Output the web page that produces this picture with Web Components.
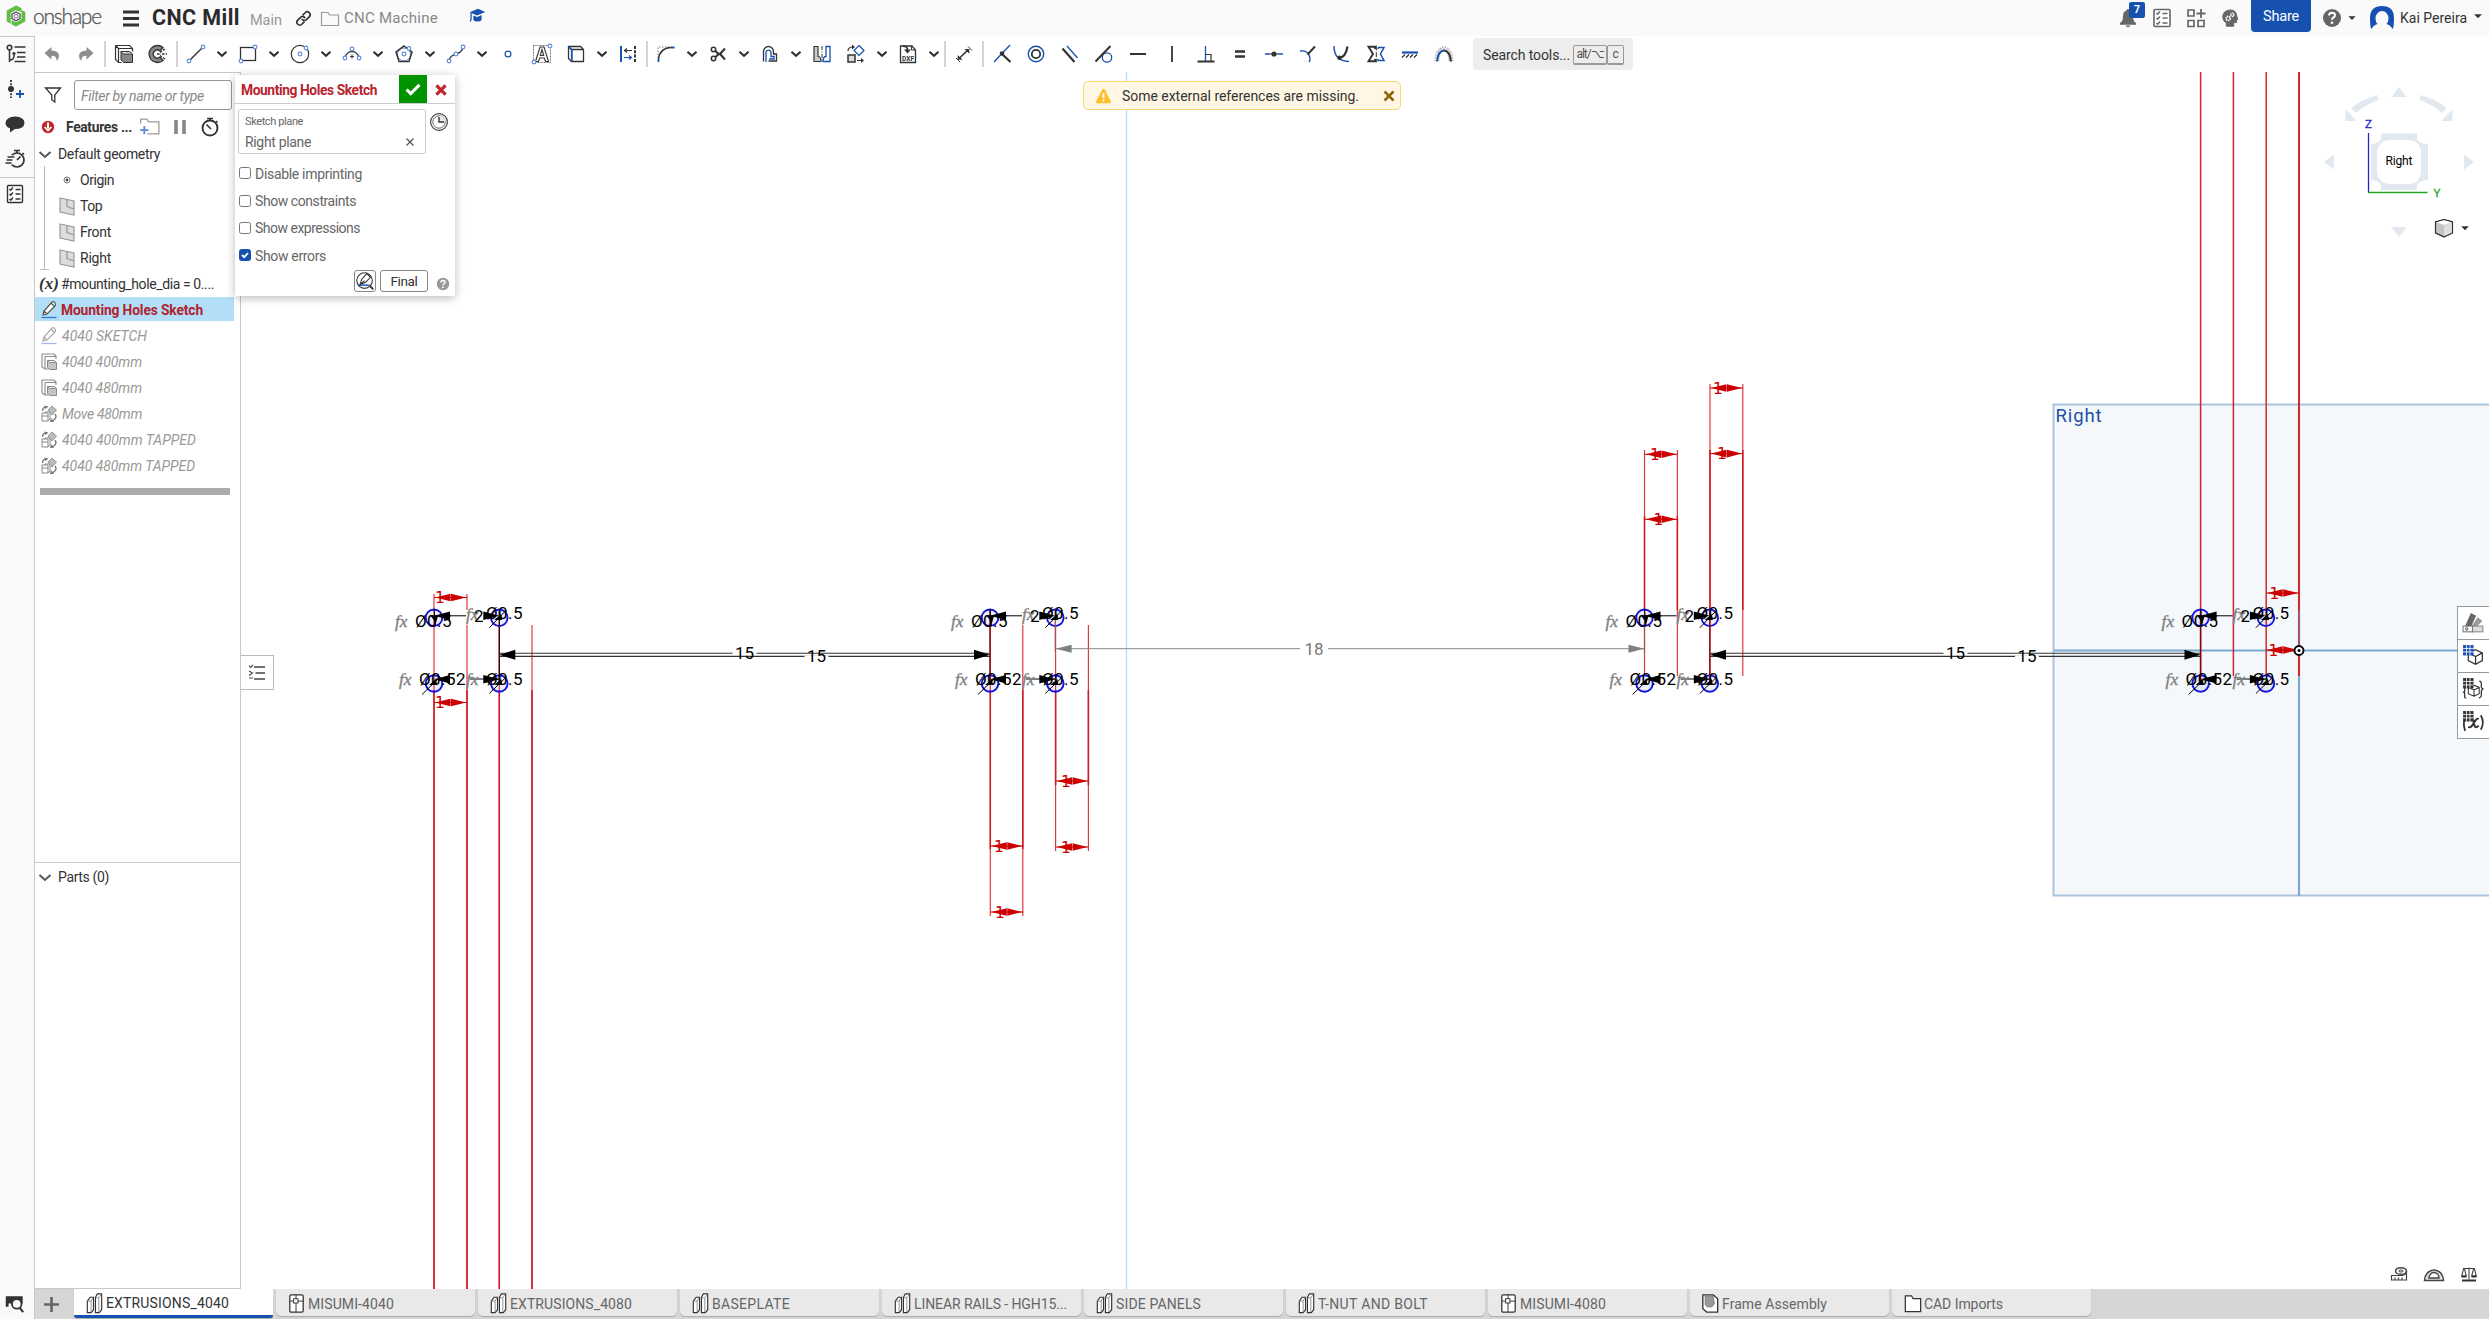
<!DOCTYPE html>
<html lang="en">
<head>
<meta charset="utf-8">
<title>CNC Mill</title>
<style>
html,body{margin:0;height:100%;overflow:hidden;background:#fff}
body{font-family:Roboto,"Liberation Sans",sans-serif;font-size:14px;color:#333}
</style>
</head>
<body>
<cad-app></cad-app>
<script>
const B='#1651b0', K='#333';
const pt=(x,y,r=1.9)=>`<circle cx="${x}" cy="${y}" r="${r}" fill="#fff" stroke="#5b8bd6" stroke-width="1.1"/>`;
const partIcon='<path d="M4.500 9.500l3-4h3.500v13l-2.500 3h-4zM13 5.500l2-3.500h4.500v16.500l-2.500 3h-4z" fill="#fff" stroke="#333" stroke-width="1.200"/><path d="M8.500 21v-11.500l2-3.500M4.500 9.500h4M16.500 21V6l2.500-3.500M13 6h3.500" fill="none" stroke="#777" stroke-width=".8"/>';
const planeIcon='<path d="M5 4l14 3v14l-14-3z" fill="#ddd" stroke="#999" stroke-width="1.2"/><path d="M12 5.500v7l7 2.500" fill="none" stroke="#999" stroke-width="1.300"/>';
const pencil=(c,b)=>`<path d="M6 17l1-4 8-9q2-1 3 1t0 3l-8 8zM7 13l3 3M14 5l3 3" fill="#fff" stroke="${c}" stroke-width="1.2"/><path d="M4.500 19.500h15" stroke="${b}" stroke-width="1.3"/>`;
const extr='<path d="M5 4h12l2 2v3M5 4v13l3 2h3M8 6.500h11M8 6.500v12.500" fill="none" stroke="#8a8a8a" stroke-width="1.1"/><path d="M10.500 10.500l2 2h7v7h-7l-2-2z" fill="#c4c4c4" stroke="#888"/><path d="M10.500 10.500h7l2 2" fill="#ddd" stroke="#888"/>';
const patt='<path d="M5 11h6v8H5zM8 11v-1h5v7l-2 2M5 14h6" fill="#fff" stroke="#888"/><path d="M11 8l4-4 4.500 4-4.500 5z" fill="#bbb" stroke="#999"/><path d="M5.500 9q0-4 4-4M18 12q3 4-3 7" fill="none" stroke="#777" stroke-width="1.300"/><path d="M7.500 3.500l4 1-3 2.500zM14 16l-1 4 4 0z" fill="#777"/>';
const grid3=(c)=>`<rect x="2" y="1" width="10" height="10" fill="${c}"/><path d="M2 4.300h10M2 7.600h10M5.300 1v10M8.600 1v10" stroke="#fff" stroke-width=".8"/>`;
const check='<path d="M6.500 7l1.200 1.200 2.300-2.700M6.500 12l1.200 1.200 2.300-2.700M6.500 17l1.200 1.200 2.300-2.700M12.500 7.500h5M12.500 12h5M12.500 17h5" fill="none" stroke-width="1.5"';
const ICONS={
 undo:'<path d="M4.500 11l7-6v3.600q7.500.4 7.500 5.400 0 3-2.500 5 .8-5.200-5-5.200v3.600z" fill="#8d8d8d"/>',
 redo:'<path d="M19.500 11l-7-6v3.600q-7.500.4-7.500 5.400 0 3 2.500 5-.8-5.200 5-5.200v3.600z" fill="#8d8d8d"/>',
 extrude:'<path d="M3.500 3.500h14l3 3v3M3.500 3.500v14l3 3h3M6.500 6.500h14M6.500 6.500v14M3.500 3.500l3 3" fill="none" stroke="#333" stroke-width="1.2"/><path d="M9 9.500l2.500 2.500h9v8.500h-9L9 18z" fill="#888" stroke="#333"/><path d="M9 9.500h8.500l3 2.500" fill="#bbb" stroke="#333"/>',
 concave:'<path d="M17 5.500a8.500 8.500 0 1 0 0 13l-3-3.500a4 4 0 1 1 0-6z" fill="#888" stroke="#333" stroke-width="1.300"/><path d="M11 12h4M16 12h5M14 10.500l5-3.500M14 13.500l5 3.500" stroke="#333" stroke-dasharray="2.500 1.200" stroke-width="1.300"/>',
 line:`<path d="M5 19L19 5" stroke="${K}" stroke-width="1.400"/>${pt(5,19)}${pt(19,5)}`,
 rect:`<rect x="4.500" y="5.500" width="15" height="13" fill="#fff" stroke="${K}" stroke-width="1.300"/>${pt(5,19)}${pt(19,5)}`,
 circle:`<circle cx="12" cy="12" r="8.700" fill="#fff" stroke="${K}" stroke-width="1.200"/>${pt(12,12)}${pt(18,6)}`,
 arc:`<path d="M5 16a7.200 8.500 0 0 1 14 0" fill="none" stroke="${K}" stroke-width="1.300"/><path d="M12 12.500v4M10 14.500h4" stroke="${K}"/>${pt(5,16)}${pt(19,16)}${pt(12,7)}`,
 polygon:`<circle cx="12" cy="12.500" r="6.500" fill="none" stroke="#5b8bd6"/><path d="M12 4l8 6-3 9.500H7L4 10z" fill="none" stroke="${K}" stroke-width="1.500"/>${pt(12,12)}${pt(17,6.500)}`,
 spline:`<path d="M5 19c1-9 13-5 14-14" fill="none" stroke="${K}" stroke-width="1.300"/>${pt(5,19)}${pt(12,12)}${pt(19,5)}`,
 point:`<circle cx="12" cy="12" r="2.900" fill="#fff" stroke="${B}" stroke-width="1.200"/>`,
 text:`<rect x="3.500" y="3.500" width="17" height="17" fill="none" stroke="#777" stroke-dasharray="2 1"/><path d="M5.500 19.500L10 5h4l4.500 14.500h-3L14.300 16H9.700l-1.200 3.500zM10.300 13.500h3.400L12 7.500z" fill="#fff" stroke="${K}" stroke-width="1.100"/>${pt(4,20)}${pt(20,4)}`,
 use:`<path d="M4.500 4.500h12l3 3v12h-12l-3-3zM7.500 7.500h12M16.500 4.500l3 3" fill="#fff" stroke="${K}" stroke-width="1.300"/><path d="M7.800 7.500v12M4.500 4.500l3 3" stroke="${B}" stroke-width="1.800"/>`,
 align:`<path d="M5 4v16" stroke="${B}" stroke-width="2"/><path d="M19 4v16" stroke="${K}" stroke-width="2" stroke-dasharray="3 1.300"/><path d="M9 8.500h7M11 6.500L8.500 8.500l2.500 2" fill="none" stroke="${K}" stroke-width="1.200"/><path d="M8 15.500h7M13 13.500l2.500 2-2.500 2" fill="none" stroke="${B}" stroke-width="1.200"/>`,
 fillet:`<path d="M4 16V5h11" fill="none" stroke="#777" stroke-dasharray="1.500 1.500"/><path d="M4.500 20v-3M17 5.500h3.500" stroke="${B}" stroke-width="1.800"/><path d="M4.500 17Q6 6 17 5.500" fill="none" stroke="${K}" stroke-width="1.500"/>`,
 trim:`<circle cx="7.500" cy="7.500" r="2.200" fill="none" stroke="${K}" stroke-width="1.500"/><circle cx="7.500" cy="16.500" r="2.200" fill="none" stroke="${K}" stroke-width="1.500"/><path d="M9.500 9q3 3.500 4.500 3l5-5.500M9.500 15q3-3.500 4.500-3l5 5.500" fill="none" stroke="${K}" stroke-width="2.100"/>`,
 offset:`<path d="M5.500 19.500V9.500a5 5 0 0 1 10 0v2.500h3v7h-8" fill="none" stroke="${K}" stroke-width="1.300"/><path d="M8 20V9.800a2.700 2.700 0 0 1 5 0V14.500h3v2.500h-5" fill="none" stroke="${B}" stroke-width="1.300"/>`,
 mirror:`<path d="M4 4.500h4v10q3 0 3 5H4z" fill="#ccc" stroke="${K}" stroke-width="1.200"/><path d="M12 4v16" stroke="${K}" stroke-dasharray="4 1.500 1 1.500"/><path d="M20 4.500h-4v10q-3 0-3 5h7z" fill="#fff" stroke="${B}" stroke-width="1.300"/>`,
 pattern:`<rect x="4" y="13" width="7" height="7" fill="#ddd" stroke="${K}" stroke-width="1.500"/><path d="M15 3.500l5 5-5 5-5-5z" fill="#fff" stroke="${B}" stroke-width="1.200"/><path d="M4 9q0-4 5-4M13 18.500h6" fill="none" stroke="${K}" stroke-width="1.200"/><path d="M8 2.500L11 5 8 7.500zM17 16l3 2.500-3 2.500z" fill="${K}"/>`,
 dxf:`<path d="M4.500 4v16.500h15V8L16 4z" fill="#fff" stroke="${K}" stroke-width="1.300"/><path d="M15.500 4v4h4" fill="none" stroke="${K}"/><path d="M7 4q5 0 4.500 5" fill="none" stroke="${K}" stroke-width="1.800"/><path d="M8 7.500h7l-3.500 4z" fill="${K}"/><text x="12" y="18.800" text-anchor="middle" font-family="Roboto" font-size="6.600" font-weight="700" fill="${K}">DXF</text>`,
 dim:`<path d="M7 16.500L16 8" stroke="${K}" stroke-width="1.700"/><path d="M12.500 7h4.800v4.800zM5.700 13v4.800h4.800z" fill="${K}"/><path d="M16 4.500l4 4M4 16l4 4" stroke="${K}"/>`,
 coincident:`<path d="M12 11.500l8-8.500M4 20l7-7.500" stroke="${B}" stroke-width="1.300"/><path d="M12 12l8.500 8" stroke="${K}" stroke-width="2.200"/><circle cx="12" cy="11.500" r="2.300" fill="${K}"/>`,
 concentric:`<circle cx="12" cy="12" r="7.700" fill="none" stroke="${B}" stroke-width="1.400"/><circle cx="12" cy="12" r="4.200" fill="none" stroke="${K}" stroke-width="1.800"/>`,
 parallel:`<path d="M9 4l10.500 12" stroke="${B}" stroke-width="1.300"/><path d="M4.500 6.500L16.500 20" stroke="${K}" stroke-width="2.200"/>`,
 tangent:`<circle cx="15" cy="15.500" r="4.700" fill="none" stroke="${B}" stroke-width="1.300"/><path d="M3.500 19.500L18.500 4" stroke="${K}" stroke-width="2"/>`,
 horiz:`<path d="M4 12h16" stroke="${K}" stroke-width="2"/>`,
 vert:`<path d="M12 4v16" stroke="${K}" stroke-width="1.800"/>`,
 perp:`<path d="M11.500 4v15" stroke="${B}" stroke-width="1.300"/><path d="M11.500 12.500h5.500V19" fill="none" stroke="${K}" stroke-width="1.200"/><path d="M3.500 19.500h17" stroke="${K}" stroke-width="2"/>`,
 equal:`<path d="M7 9.500h10M7 14.500h10" stroke="${K}" stroke-width="2.400"/>`,
 midpoint:`<path d="M3 12h5M16 12h5" stroke="${B}" stroke-width="1.500"/><path d="M8 12h8" stroke="${K}"/><circle cx="12" cy="12" r="2.600" fill="${K}"/>`,
 normal:`<path d="M4 9q7-1 9 4t0 7" fill="none" stroke="${B}" stroke-width="1.400"/><path d="M11.500 12.500l7.500-8" stroke="${K}" stroke-width="1.900"/>`,
 pierce:`<path d="M4 4q0 15 15 15.500" fill="none" stroke="${B}" stroke-width="1.400"/><path d="M9.500 15.500q6 0 8-11" fill="none" stroke="${K}" stroke-width="2.200"/><circle cx="9.500" cy="15.800" r="2.300" fill="${K}"/>`,
 symmetric:`<path d="M11 7V4.800H4.500L9 12l-4.500 7.200H11V17" fill="none" stroke="${K}" stroke-width="1.900"/><path d="M12.300 3.500v17" stroke="${K}" stroke-dasharray="5 1.500"/><path d="M14 5.500h6L16.500 12l3.500 6.500h-6V17M14 7V5.500" fill="none" stroke="${B}" stroke-width="1.500"/>`,
 fix:`<path d="M4 10.500h16" stroke="${B}" stroke-width="2.200"/><path d="M4 15.500l3-3M8 15.500l3-3M12 15.500l3-3M16 15.500l3-3" stroke="${K}" stroke-width="1.300"/>`,
 curvature:`<path d="M5 19q.5-9 4-11M19 19q-.5-9-4-11M9 8q3-3 6 0" fill="none" stroke="#aaa" stroke-width="5" stroke-dasharray="1 1"/><path d="M5 19.500Q6 9 12 8.500" fill="none" stroke="${B}" stroke-width="1.800"/><path d="M12 8.500Q18 9 19 19.500" fill="none" stroke="${K}" stroke-width="2"/>`,
 chev:`<path d="M7.500 9.800l4.500 4 4.500-4" fill="none" stroke="${K}" stroke-width="2.200"/>`,
 treechev:`<path d="M6.500 10l5.500 5 5.500-5" fill="none" stroke="#555" stroke-width="2"/>`,
 logo:'<path d="M12 1.500l-9.300 5v11l4 2.300V9L12 6z M12 1.500v4.500l2 1.200 3.500-3z" fill="#5fbf45"/><path d="M12 1.500l5.500 3v3.500L12 6z" fill="#5fbf45"/><path d="M21.300 8v9.500L12 22.500l-4.500-2.300v-4l4.500 2 5.500-3V6z" fill="#5fbf45"/><path d="M12 8l4 2.200v4.300l-4 2.200-4-2.200v-4.300z" fill="none" stroke="#555" stroke-width="1.300"/><circle cx="12" cy="12.300" r="2" fill="none" stroke="#555" stroke-width=".8"/>',
 burger:`<path d="M4 6h16M4 12.500h16M4 19h16" stroke="${K}" stroke-width="2.800"/>`,
 link:'<g transform="rotate(-45 12 12)" fill="none" stroke="#333" stroke-width="1.700"><path d="M10.500 15H6.500a3 3 0 0 1 0-6H11a3 3 0 0 1 2.500 4"/><path d="M13.500 9h4a3 3 0 0 1 0 6H13a3 3 0 0 1-2.500-4"/></g>',
 folder:'<path d="M3.500 18.500v-13h6.500l1.500 2.500h9v10.500z" fill="none" stroke="#999" stroke-width="1.200"/>',
 grad:`<path d="M4 8l9-4 8 3.500-9 4z" fill="${B}"/><path d="M8 11.500V16q1 2 4.500 2t4.500-2v-5l-4.800 2z" fill="${B}"/><path d="M5.500 8.500v7.500l-1 2" stroke="${B}" fill="none" stroke-width="1.400"/>`,
 bell:'<path d="M12 3a1.500 1.500 0 0 0-1.500 1.600Q7 5.500 7 10q0 5.500-3 7v1.700h16V17q-3-1.500-3-7 0-4.500-3.500-5.400A1.500 1.500 0 0 0 12 3zM9.700 19.500h4.600q-.5 1.800-2.300 1.800t-2.300-1.800z" fill="#666"/>',
 checks:'<rect x="4" y="3.500" width="16" height="17" rx="1" fill="#fff" stroke="#666" stroke-width="1.600"/>'+check+' stroke="#666"/>',
 railchecks:'<rect x="4.500" y="3.500" width="15" height="17" rx="1" fill="#fff" stroke="#333" stroke-width="1.400"/>'+check+' stroke="#333"/>',
 apps:'<path d="M4 4h6v6H4zM4 14.500h6v6H4zM14 14.500h6v6h-6z" fill="none" stroke="#666" stroke-width="1.700"/><path d="M17 3v9M12.500 7.500h9" stroke="#666" stroke-width="1.800"/>',
 head:'<path d="M8 21v-3.500q-4-2.500-4-7Q4.500 4 12 3.200q7 0 7.500 7l1 3.300h-1.500v3.500h-3V21z" fill="#666" stroke="#666"/><circle cx="10" cy="12.500" r="2.200" fill="#666" stroke="#fff" stroke-width="1.800" stroke-dasharray="1.500 .5"/><circle cx="14.500" cy="8.500" r="1.700" fill="#666" stroke="#fff" stroke-width="1.700" stroke-dasharray="1.200 .4"/>',
 help:'<circle cx="12" cy="12" r="9" fill="#666"/><path d="M9 9.500q0-2.800 3-2.800t3 2.500q0 1.500-1.500 2.300T12 13.800" fill="none" stroke="#fff" stroke-width="2"/><circle cx="12" cy="16.700" r="1.300" fill="#fff"/>',
 caret:'<path d="M7.800 10h8.400L12 14.500z" fill="#333"/>',
 avatar:`<path d="M1.500 23Q0 22 0 12 0 0 12 0t12 12q0 10-1.500 11-2-4-6-5a6.500 7.500 0 1 0-9 0q-4 1-6 5z" fill="${B}"/>`,
 versions:'<circle cx="6.500" cy="5.500" r="2.300" fill="none" stroke="#333" stroke-width="1.500"/><path d="M6.500 8v12M6.500 18q5 0 4.500-5" fill="none" stroke="#333" stroke-width="1.500"/><circle cx="11" cy="11.500" r="1.600" fill="#333"/><path d="M11.500 5h11M14 10.500h8.500M14 15h8.500M11.500 19.500h11" stroke="#333" stroke-width="1.700"/>',
 nodeplus:`<path d="M8 3v18" stroke="#333" stroke-width="1.800" stroke-dasharray="2 1.300"/><circle cx="8" cy="12" r="3" fill="#333"/><path d="M13 17h8M17 13v8" stroke="${B}" stroke-width="1.800"/>`,
 chat:'<path d="M12 4.500q9.500.5 9.500 6.500-.5 6-9.500 6l-5 3.500v-4.200q-4.500-1.500-4.500-5.300Q3 5 12 4.500z" fill="#333"/>',
 fast:'<circle cx="14" cy="13" r="7" fill="none" stroke="#333" stroke-width="1.700"/><path d="M14 13l3.500-3.500M11 3.500h6M14 3.500v2.500M19.500 6l1.500 1.500" stroke="#333" stroke-width="1.700"/><path d="M3.500 10h7M3 13h7M2.500 16h7" stroke="#fafafa" stroke-width="3.500"/><path d="M4.500 10h7M3.500 13h6M2.500 16h6" stroke="#333" stroke-width="1.300"/>',
 tabsearch:'<path d="M3 4.500h18.500v8h-2a6 6 0 0 0-10 0H6V16H3z" fill="#333"/><circle cx="15" cy="13" r="5.200" fill="#fafafa" stroke="#333" stroke-width="2"/><path d="M18 17l4 5" stroke="#333" stroke-width="2.400"/>',
 funnel:`<path d="M4.500 5h15l-5.700 7v7l-3-2.300V12z" fill="none" stroke="${K}" stroke-width="1.300"/>`,
 down:'<circle cx="12" cy="12" r="6.200" fill="#c1272d"/><path d="M12 7.500v6" stroke="#fff" stroke-width="2"/><path d="M8.700 12l3.300 3.500 3.300-3.500" fill="none" stroke="#fff" stroke-width="1.800"/>',
 newfolder:'<path d="M3.500 6V5h6l1.500 2.500h10V19h-11M3.500 6v3" fill="none" stroke="#999" stroke-width="1.200"/><path d="M3 15.500h8M7 11.500v8" stroke="#5b8bd6" stroke-width="1.700"/>',
 pause:'<path d="M8 5v14M16 5v14" stroke="#888" stroke-width="3.600"/>',
 watch:'<circle cx="12" cy="13" r="7.500" fill="none" stroke="#333" stroke-width="1.900"/><path d="M9 3.500h6M12 3.500V6M8.500 9.500l4.500 4.500M18 6l1.500 1.500" stroke="#333" stroke-width="1.700"/>',
 origin:'<circle cx="12" cy="12" r="3" fill="none" stroke="#777"/><circle cx="12" cy="12" r="1.400" fill="#444"/>',
 plane:planeIcon, sketch:pencil('#555','#3a78c9'), sketchoff:pencil('#aaa','#a3bbe0'), extr, patt,
 part:partIcon,
 drawing:'<rect x="5" y="3" width="14" height="18" rx="1.500" fill="#fff" stroke="#333" stroke-width="1.300"/><path d="M5 9.500h5M13 9.500h6M11.500 3v4M11.500 11.500V21" stroke="#333"/><rect x="9" y="7" width="4.500" height="4.500" fill="#fff" stroke="#333"/>',
 assembly:'<path d="M4 3h11l4.500 4v14H8l-4-3.500z" fill="#fff" stroke="#333" stroke-width="1.400"/><path d="M6.500 4h8l1.500 8-2.500 3.500H8.500L6.500 13z" fill="#999" stroke="#777"/>',
 tabfolder:'<path d="M4.500 20.500V4H11l1.500 3h8v13.500z" fill="#fff" stroke="#333" stroke-width="1.300"/>',
 plus:'<path d="M3.500 12h17M12 3.500v17" stroke="#666" stroke-width="3"/>',
 warn:'<path d="M12 4q1 0 1.500 1l6.300 12.500q.5 1.500-1 1.500H5.200q-1.500 0-1-1.500L10.500 5q.5-1 1.500-1z" fill="#fdc029"/><path d="M12 8.500v5" stroke="#fff" stroke-width="2"/><circle cx="12" cy="16" r="1.200" fill="#fff"/>',
 xbrown:'<path d="M7.500 7.500l9 9M16.500 7.500l-9 9" stroke="#8d6708" stroke-width="2.500"/>',
 xred:'<path d="M7 7l10 10M17 7L7 17" stroke="#c1272d" stroke-width="3.500"/>',
 xthin:'<path d="M8.500 8.500l7 7M15.500 8.500l-7 7" stroke="#555" stroke-width="1.300"/>',
 ok:'<path d="M5 12.500l4.500 4.500L19 7.500" fill="none" stroke="#fff" stroke-width="3.300"/>',
 clock:'<circle cx="12" cy="12" r="8.400" fill="#fff" stroke="#444" stroke-width="1.200"/><circle cx="12" cy="12" r="6.200" fill="#fff" stroke="#666" stroke-width="1"/><path d="M12 5.700V12h6.300A6.300 6.300 0 0 0 12 5.700z" fill="#e8e8e8"/><path d="M12 7V12h5" fill="none" stroke="#333" stroke-width="1.400"/>',
 pen:`<circle cx="11.500" cy="11.500" r="8.500" fill="none" stroke="${K}" stroke-width="1.200"/><path d="M6.500 16l2-6 5.500-6 4 4-5.500 5.500zM11.500 11.500l-5 4.500" fill="#fff" stroke="${K}" stroke-width="1.200"/><path d="M5 16.500h12" stroke="${B}" stroke-width="1.600"/><path d="M17 17l4 4" stroke="${K}" stroke-width="2"/>`,
 helpsm:'<circle cx="12" cy="12" r="6.200" fill="#999"/><path d="M10 10.500q0-2 2-2t2 1.700q0 1-1 1.500t-1 1.500" fill="none" stroke="#fff" stroke-width="1.400"/><circle cx="12" cy="15.200" r=".9" fill="#fff"/>',
 list:'<path d="M9 6h11M10.500 12h9.500M9 18h11" stroke="#444" stroke-width="1.500"/><path d="M4 4.500l1.500 2L8 4M4 10l3.500 2L4 14.500M4 17h4" fill="none" stroke="#444" stroke-width="1.100"/>',
 appearance:'<path d="M9.500 2l5 2.500-5 11H3.500z" fill="#666"/><path d="M16 6l4.500 3.500-6 6h-5z" fill="#999"/><rect x="10" y="14.500" width="11" height="5.500" fill="#ddd" stroke="#888"/><rect x="2" y="14.500" width="9" height="5.500" fill="#fff" stroke="#777"/><circle cx="5.500" cy="17.200" r="1.200" fill="none" stroke="#666"/>',
 config:'<path d="M14 5.500l6.500 3v7.500l-6.500 3.500-7-3.500V8.500zM7 8.500l7 3.500 6.500-3.500M14 12v7.500" fill="#fff" stroke="#333" stroke-width="1.200"/>'+grid3(B),
 confvar:'<path d="M12.500 8l5 2v6l-5 2.500-5.500-2.500v-6zM7 10l5.500 2.500 5-2.500M12.500 12.500v6" fill="#fff" stroke="#333"/><path d="M5 9q-2 0-1.500 3T2 14.500q2 0 1.500 3T5 20M17.500 4q2.500 0 2 3.500t2 4q-2.500.5-2 4.500t-2.500 4" fill="none" stroke="#333" stroke-width="1.200"/>'+grid3('#333'),
 vars:'<path d="M4 7q-2.500 6 0 13M19 5q4 7 0 14" fill="none" stroke="#333" stroke-width="1.700"/><path d="M8 8q3-1.500 4 3l1 4q1 3 4 0M17 8.500q-2-1-4 3l-2 3q-2 3-4 1.500" fill="none" stroke="#333" stroke-width="1.900"/>'+grid3('#333'),
 tape:'<ellipse cx="14" cy="8" rx="5.500" ry="3.300" fill="#fff" stroke="#444" stroke-width="1.500"/><ellipse cx="14" cy="8" rx="2.300" ry="1" fill="none" stroke="#444"/><path d="M19.500 8v9H4.500v-4.500h11q4-1 4-4.500M8 14.500v2.500M11.500 14.500v2.500M15 14.500v2.500" fill="none" stroke="#444" stroke-width="1.200"/>',
 protractor:'<path d="M2.500 17.500a9.500 10.500 0 0 1 19 0z" fill="#ddd" stroke="#444" stroke-width="1.500"/><path d="M7 15a5 5.500 0 0 1 10 0z" fill="#fff" stroke="#444" stroke-width="1.400"/>',
 scale:'<path d="M6 5.500h12M12 4.500v12M6.500 6l-1.800 7h4.600L7.500 6M16.500 6l-1.800 7h4.600L17.500 6" fill="none" stroke="#444" stroke-width="1.100"/><path d="M4.500 13.500h5M14.500 13.500h5M5 17.500h14" stroke="#333" stroke-width="2"/>',
 cube:'<path d="M12 3.500l8.500 2.500v11L12 21l-8.500-4V6z" fill="#c4c4c4" stroke="#333" stroke-width="1.100"/><path d="M12 3.500L20.500 6 12 9 3.500 6z" fill="#fff"/><path d="M12 9l8.500-3v11L12 21z" fill="#dedede"/><path d="M12 3.500l8.500 2.500v11L12 21l-8.500-4V6z" fill="none" stroke="#333" stroke-width="1.100"/>'
};
/* Base class: each component supplies html() and css() */
class Part extends HTMLElement{
  connectedCallback(){
    if(this.shadowRoot) return;
    this.attachShadow({mode:'open'}).innerHTML=`<style>${this.css()}</style>${this.html()}`;
  }
}
class UiIcon extends Part{
  css(){return ':host{display:inline-flex;flex:none}svg{display:block;overflow:visible}'}
  html(){const s=this.getAttribute('size')||24;return `<svg width="${s}" height="${s}" viewBox="0 0 24 24">${ICONS[this.getAttribute('name')]||''}</svg>`}
}
/* One line of text whose tracking is adjusted to fill a given width */
class UiText extends Part{
  css(){return ':host{display:inline-block;white-space:pre;flex:none}'}
  html(){return '<slot></slot>'}
  connectedCallback(){
    super.connectedCallback();
    const w=+this.getAttribute('w'), n=this.textContent.length;
    if(w&&n){const d=(w-this.getBoundingClientRect().width)/n;this.style.letterSpacing=d.toFixed(3)+'px';}
  }
}
class AppHeader extends Part{
  css(){return `:host{display:flex;height:36px;background:#fafafa;align-items:center;box-sizing:border-box}
   .l,.r{display:flex;align-items:center;height:36px}.r{margin-left:auto}
   .brand{font:300 21px Lato,Roboto,sans-serif;color:#555;margin:-6px 0 0 5px;-webkit-text-stroke:.3px #555}
   h1{font-size:21.500px;font-weight:700;margin:0 0 0 9px;line-height:34px;color:#2b2b2b;display:flex}
   .main{color:#999;font-size:14.500px;margin-left:10px;padding-top:4px}
   .fold{color:#888;font-size:15px;margin-left:2px}
   .bell{position:relative;display:flex}.badge{position:absolute;left:13px;top:-4px;width:16px;height:16px;border-radius:2px;background:${B};color:#fff;font-size:10.500px;font-weight:700;line-height:16px;text-align:center}
   .share{width:60px;height:32px;background:${B};color:#fff;border-radius:0 0 4px 4px;display:flex;align-items:center;justify-content:center;font-size:14.500px;align-self:flex-start}
   .user{font-size:14px;margin-left:6px}`}
  html(){return `<div class="l"><ui-icon name="logo" size="24" style="margin:-4px 0 0 4px"></ui-icon><ui-text class="brand" w="68">onshape</ui-text>
   <ui-icon name="burger" style="margin:-1px 0 0 18px"></ui-icon><h1><ui-text w="88">CNC Mill</ui-text></h1><ui-text class="main" w="32">Main</ui-text>
   <ui-icon name="link" size="23" style="margin-left:10px"></ui-icon><ui-icon name="folder" style="margin:2px 0 0 3px"></ui-icon><ui-text class="fold" w="94">CNC Machine</ui-text>
   <ui-icon name="grad" size="22" style="margin:-5px 0 0 28px"></ui-icon></div>
   <div class="r"><span class="bell"><ui-icon name="bell"></ui-icon><span class="badge">7</span></span><ui-icon name="checks" style="margin-left:10px"></ui-icon>
   <ui-icon name="apps" style="margin-left:10px"></ui-icon><ui-icon name="head" size="22" style="margin-left:11px"></ui-icon>
   <div class="share" style="margin-left:10px"><ui-text w="36">Share</ui-text></div><ui-icon name="help" style="margin-left:9px"></ui-icon><ui-icon name="caret" size="20" style="margin-left:-2px"></ui-icon>
   <ui-icon name="avatar" style="margin-left:8px"></ui-icon><ui-text class="user" w="67">Kai Pereira</ui-text><ui-icon name="caret" size="22" style="margin:-4px 0 0 0"></ui-icon></div>`}
}
class ToolBar extends Part{
  css(){return `:host{display:flex;height:36px;background:#fff;align-items:center}
   .c{width:34px;display:flex;justify-content:center;flex:none}.v{width:18px;display:flex;justify-content:center;flex:none}
   .s{width:2px;margin:0 1px;height:26px;background:#d3d3d3;flex:none}
   .find{margin-left:12px;width:160px;height:32px;box-sizing:border-box;background:#ededed;border-radius:3px;display:flex;align-items:center;padding:1px 0 0 10px}
   kbd{font:12px Roboto,sans-serif;color:#555;border:1px solid #999;border-bottom-width:2px;border-radius:2px;height:17px;line-height:17px;text-align:center;box-sizing:content-box}`}
  html(){
    const list='undo redo | extrude concave | line v rect v circle v arc v polygon v spline v point text use v align | fillet v trim v offset v mirror pattern v dxf v | dim | coincident concentric parallel tangent horiz vert perp equal midpoint normal pierce symmetric fix curvature';
    return list.split(' ').map(n=>n==='|'?'<span class="s"></span>':n==='v'?'<span class="v"><ui-icon name="chev"></ui-icon></span>':`<span class="c"><ui-icon name="${n}"></ui-icon></span>`).join('')
     +`<div class="find"><ui-text w="87">Search tools...</ui-text><kbd style="margin-left:3px;width:32px"><ui-text w="27">alt/⌥</ui-text></kbd><kbd style="width:15px">c</kbd></div>`}
}
class SideRail extends Part{
  css(){return `:host{display:flex;flex-direction:column;width:34px;box-sizing:content-box;background:#fafafa;border-right:1px solid #c8c8c8;border-top:1px solid #c8c8c8;flex:none}
   .i{height:35px;display:flex;align-items:center;padding:0 0 2px 3px;box-sizing:border-box}.d{border-top:1px solid #c8c8c8}`}
  html(){return ['versions','nodeplus','chat','fast'].map(n=>`<div class="i"><ui-icon name="${n}"></ui-icon></div>`).join('')+
   '<div class="i d"><ui-icon name="railchecks"></ui-icon></div><div class="i" style="margin-top:auto;height:30px"><ui-icon name="tabsearch" size="22"></ui-icon></div>'}
}
class TreeRow extends Part{
  css(){return `:host{display:flex;height:26px;align-items:center;padding:1px 0 0 2px;box-sizing:border-box;font-size:14px;color:#333}
   :host([child]){padding-left:20px}:host([off]){color:#999;font-style:italic}
   :host([sel]){background:#b2def7;height:24px;margin:1px 6px 1px 0;color:#b0232e;font-weight:700;font-size:13.800px}
   :host([lead]) .ic{margin:0 1px 0 -4px}
   .ic{width:24px;display:flex;justify-content:center;flex:none}.x{font:italic 700 17px "Liberation Serif",serif}
   ui-text{margin-left:var(--gap,0px)}`}
  html(){const i=this.getAttribute('icon');return `<span class="ic">${i==='x'?'<span class="x">(<i>x</i>)</span>':`<ui-icon name="${i}"></ui-icon>`}</span><ui-text w="${this.getAttribute('w')}">${this.getAttribute('label')}</ui-text>`}
}
class FeaturePanel extends Part{
  css(){return `:host{display:flex;flex-direction:column;width:205px;border-right:1px solid #c8c8c8;border-top:1px solid #c8c8c8;border-bottom:1px solid #c8c8c8;background:#fff;flex:none}
   .filter{display:flex;padding:7px 0 0 6px;height:29px;align-items:center}
   .in{margin-left:9px;width:158px;height:30px;box-sizing:border-box;border:1px solid #999;border-radius:3px;display:flex;align-items:center;padding:2px 0 0 6px;font-style:italic;color:#8a8a8a;font-size:14px;margin-top:1px}
   .ft{display:flex;align-items:center;height:27px;padding:4px 0 0 1px;font-weight:700;font-size:13.800px}
   .kids{position:relative}.kids::before{content:"";position:absolute;left:9px;top:0;height:103px;border-left:1px solid #bbb}
   .kids::after{content:"";position:absolute;left:5px;top:103px;width:9px;border-top:1px solid #bbb}
   .bar{height:7px;background:#acacac;margin:10px 10px 0 5px}.parts{margin-top:367px;border-top:1px solid #c8c8c8}`}
  html(){const r=(i,l,w,a='',g=0)=>`<tree-row icon="${i}" label="${l}" w="${w}" ${a} style="--gap:${g}px"></tree-row>`;
   return `<div class="filter"><ui-icon name="funnel"></ui-icon><div class="in"><ui-text w="123">Filter by name or type</ui-text></div></div>
   <div class="ft"><ui-icon name="down"></ui-icon><ui-text w="66" style="margin-left:6px">Features ...</ui-text><ui-icon name="newfolder" style="margin-left:5px" size="25"></ui-icon><ui-icon name="pause" style="margin-left:6px"></ui-icon><ui-icon name="watch" style="margin-left:6px"></ui-icon></div>
   ${r('treechev','Default geometry',102,'lead')}<div class="kids">${r('origin','Origin',34,'child',1)}${r('plane','Top',22,'child',1)}${r('plane','Front',31,'child',1)}${r('plane','Right',31,'child',1)}</div>
   ${r('x','#mounting_hole_dia = 0....',153)}${r('sketch','Mounting Holes Sketch',142,'sel')}${r('sketchoff','4040 SKETCH',85,'off',1)}${r('extr','4040 400mm',80,'off',1)}${r('extr','4040 480mm',80,'off',1)}${r('patt','Move 480mm',80,'off',1)}${r('patt','4040 400mm TAPPED',134,'off',1)}${r('patt','4040 480mm TAPPED',133,'off',1)}
   <div class="bar"></div><div class="parts">${r('treechev','Parts (0)',51,'lead')}</div>`}
}
class SketchDialog extends Part{
  css(){return `:host{display:block;width:220px;height:221px;background:#fff;box-shadow:0 2px 9px rgba(0,0,0,.28);color:#666;font-size:14px}
   .h{display:flex;height:28px;border-bottom:1px solid #ccc;align-items:center;color:#b8232f;font-weight:700;font-size:13.800px;padding-left:6px}
   .h ui-text{padding-top:2px}
   .ok{width:28px;height:28px;background:#009300;display:flex;align-items:center;justify-content:center;margin-left:auto}.x{width:28px;display:flex;justify-content:center;padding-top:2px}
   .p{display:flex;padding:5px 0 0 3px}.box{width:188px;height:45px;border:1px solid #ccc;border-radius:2px;box-sizing:border-box;padding:4px 3px 0 6px}
   .s{font-size:11px;height:16px;line-height:16px;display:flex}.v{display:flex;justify-content:space-between;align-items:center;height:24px;margin-top:0;font-size:14px}
   .o{display:flex;align-items:center;height:27.400px;padding-left:4px}.cb{width:12px;height:12px;box-sizing:border-box;border:1px solid #777;border-radius:2.500px;margin-right:4px;display:flex}
   .o ui-text{padding-top:1px}
   .on{background:${B};border-color:${B}}.opts{padding-top:5.500px}
   .f{display:flex;align-items:center;margin-top:-2px;padding-left:119px;color:#333;font-size:13.500px}.b{height:22px;box-sizing:border-box;border:1px solid #888;border-radius:3px;display:flex;align-items:center;justify-content:center}`}
  html(){const o=(l,w,c)=>`<div class="o"><span class="cb ${c?'on':''}">${c?'<svg width="10" height="10"><path d="M2 5l2.200 2.200L8 3" fill="none" stroke="#fff" stroke-width="1.800"/></svg>':''}</span><ui-text w="${w}">${l}</ui-text></div>`;
   return `<div class="h"><ui-text w="136">Mounting Holes Sketch</ui-text><span class="ok"><ui-icon name="ok" size="22"></ui-icon></span><span class="x"><ui-icon name="xred" size="22"></ui-icon></span></div>
   <div class="p"><div class="box"><div class="s"><ui-text w="58">Sketch plane</ui-text></div><div class="v"><ui-text w="66">Right plane</ui-text><ui-icon name="xthin"></ui-icon></div></div><ui-icon name="clock" style="margin:1px 0 0 1px"></ui-icon></div>
   <div class="opts">${o('Disable imprinting',107)}${o('Show constraints',101)}${o('Show expressions',105)}${o('Show errors',71,1)}</div>
   <div class="f"><span class="b" style="width:22px"><ui-icon name="pen" size="22"></ui-icon></span><span class="b" style="width:49px;margin-left:4px"><ui-text w="27">Final</ui-text></span><ui-icon name="helpsm" style="margin:5px 0 -1px 3px"></ui-icon></div>`}
}
class ToastNote extends Part{
  css(){return `:host{display:flex;width:318px;height:29px;box-sizing:border-box;background:#fff6e4;border:1px solid #fad775;border-radius:5px;align-items:center;padding:1px 0 0 8px}`}
  html(){return `<ui-icon name="warn" size="23"></ui-icon><ui-text w="237" style="margin-left:7px">${this.getAttribute('text')}</ui-text><ui-icon name="xbrown" style="margin-left:18px"></ui-icon>`}
}
class ViewCube extends Part{
  css(){return ':host{display:block}svg{display:block}'}
  html(){const c='#e1e8ef';return `<svg width="160" height="160" viewBox="2320 80 160 160" font-family="Roboto">
   <g fill="${c}"><path d="M2399 87l7.500 10h-15zM2399 237l-7.500-10h15zM2324 162l10-7.500v15zM2474 162l-10-7.500v15z"/>
   <path d="M2377.500 95l1.200 5q-13 4-22.500 13l-5 -5q11-9 26.300-13zM2345.500 109v12h11zM2420.500 95l-1.200 5q13 4 22.500 13l5-5q-11-9-26.300-13zM2452.500 109v12h-11z"/>
   <path d="M2381 133.500h36v6q4 5 11 4.500v36q-7 0-11 5v5h-36v-5q-4-5-10-5v-36q6 0 10-4.500z"/></g>
   <path d="M2388 140h22q11 2 11 12v20q-1 11-11 12h-22q-10-2-11-12v-20q1-10 11-12z" fill="#fff"/>
   <path d="M2368.500 133v59" stroke="#2323cf" stroke-width="1.300"/><path d="M2368 192.500h59.500" stroke="#1fa51f" stroke-width="1.500"/>
   <text x="2399" y="165.300" text-anchor="middle" font-size="12" textLength="27" fill="#000">Right</text>
   <text x="2368.500" y="128" text-anchor="middle" font-size="11.500" fill="#2323cf" stroke="#2323cf" stroke-width=".3">Z</text><text x="2437" y="196.500" text-anchor="middle" font-size="11.500" fill="#1fa51f" stroke="#1fa51f" stroke-width=".3">Y</text></svg>`}
}
class PanelTabs extends Part{
  css(){return ':host{display:flex;flex-direction:column;width:32px}div{height:32px;background:#fff;border:1px solid #999;border-right:0;border-bottom-width:0;display:flex;align-items:center;padding-left:3px;box-sizing:content-box;width:29px;overflow:hidden}div:last-child{border-bottom-width:1px}'}
  html(){return ['appearance','config','confvar','vars'].map(n=>`<div><ui-icon name="${n}" size="25"></ui-icon></div>`).join('')}
}
class SketchCanvas extends Part{
  css(){return `:host{display:block;position:relative;flex:1;overflow:hidden;background:#fff}
   .scene{position:absolute;left:0;top:0}.o{position:absolute}.row{display:flex;align-items:center}
   .ex{width:32px;height:33px;border:1px solid #bbb;border-left:0;background:#fff;display:flex;align-items:center;justify-content:center;box-sizing:content-box}`}
  scene(){
    const R='#cc0000'; let s='';
    const v=(x,a,b,w=1.200,c='#e0393c')=>{s+=`<path d="M${x} ${a}V${b}" stroke="${c}" stroke-width="${w}"/>`};
    const ln=(x1,y1,x2,y2,c='#000',w=1)=>{s+=`<path d="M${x1} ${y1}L${x2} ${y2}" stroke="${c}" stroke-width="${w}"/>`};
    const ah=(x,y,d,l=16,h=4,c='#000')=>{s+=`<path d="M${x} ${y}l${d*l} ${-h}v${2*h}z" fill="${c}"/>`};
    const tx=(x,y,t,o='')=>{s+=`<text x="${x}" y="${y}" ${o}>${t}</text>`};
    // Reference plane
    s+=`<rect x="2053.500" y="404.500" width="500" height="491" fill="#f4f8fb" stroke="#a9c3dd" stroke-width="2"/>`;
    ln(2054,650.5,2489,650.5,'#7ca8d3',2.2); ln(2299,404,2299,896,'#7ca8d3',2.2);
    tx(2055.5,421.5,'Right',`font-size="18.500" fill="#1f4fa3" textLength="46"`);
    ln(1126.5,72,1126.5,1289,'#b2dcf7',1.2);
    // Construction lines
    const tw=1.5,dr='#cc1a1e';
    v(434,594,1289);v(467,594,610);v(467,625,1289);v(499.3,625,1289);v(532,625,1289);
    [434,467,499.3,532].forEach(x=>v(x,690,1289,tw,dr));
    v(990.3,625,916);v(1022.8,625,916);v(1055.6,625,851);v(1088.4,625,851);
    v(990.3,690,849,tw,dr);v(1022.8,690,849,tw,dr);v(1055.6,690,785,tw,dr);v(1088.4,690,785,tw,dr);
    v(1644.5,450,676);v(1677.4,450,676);v(1710,384,676);v(1742.8,384,676);
    v(1644.5,516,610,tw,dr);v(1677.4,516,610,tw,dr);v(1710,450,610,tw,dr);v(1742.8,450,610,tw,dr);
    [2200.6,2233.4,2266.2].forEach(x=>v(x,72,676,tw,'#d4262a'));v(2299,72,676,2,'#cf2a30');
    ln(2299,610,2299,645,'#a85070',2);
    // Spans between hole groups
    const span=(a,b,t1,t2)=>{
      ln(a,653.3,b,653.3,'#333',1.1);ln(a,656.4,b,656.4,'#333',1.1);ah(a,654.8,1,16,5);ah(b,654.8,-1,16,5);
      s+=`<rect x="${t1-12}" y="648" width="24" height="6.500" fill="#fff"/><rect x="${t2-12}" y="655.500" width="24" height="7" fill="${t2>2053?'#f4f8fb':'#fff'}"/>`;
      tx(t1,659.3,'15','text-anchor="middle"');tx(t2,662,'15','text-anchor="middle"');};
    span(499.3,990,744.5,816.5);span(1710,2200.5,1955.5,2027);
    ln(1055.6,648.7,1300,648.7,'#888',1);ln(1328,648.7,1644.5,648.7,'#888',1);ah(1055.6,648.7,1,16,4,'#808080');ah(1644.5,648.7,-1,16,4,'#808080');
    tx(1314,654.8,'18','text-anchor="middle" fill="#777"');
    // Hole groups
    const fx='fill="#808080" stroke="#808080" stroke-width=".35" font-family="Liberation Serif" font-style="italic" font-size="17" textLength="12.500" lengthAdjust="spacingAndGlyphs"';
    [434,990,1644.5,2200.6].forEach((x,i)=>{
      const x2=x+65.3;
      [[x,617.8],[x2,617.8],[x,683.5],[x2,683.5]].forEach(([a,b])=>{s+=`<circle cx="${a}" cy="${b}" r="8.300" fill="rgba(90,90,220,.1)" stroke="#1414e0" stroke-width="1.900"/>`});
      if(i===1||i===3)ln(x,610,x,684,'#7d0a0c',1.4);else if(i===0)ln(x2,610,x2,684,'#3a0506',1.4);
      if(i===2){ln(x2,610,x2,684,'#8d0a0c',1.4);ln(x,625,x,653,'#a05055',1.2)}
      if(i===1)ln(x2,610,x2,652,'#a05055',1.2);
      ln(x,615.8,x+32,615.8);ln(x+36,679,x2,679);
      ah(x,615.8,1,16,4.2);ah(x2,615.8,-1,16,4.2);ah(x,679.2,1,16,4.2);ah(x2,679.2,-1,16,4.2);
      ln(x,609,x+1.500,626);ln(x2-10,627.8,x2+7,610);ln(x-12,694.5,x+6,677);ln(x2-10,693.5,x2+7,677);
      s+=`<path d="M${x-4} 615l8 1-2 7zM${x2-5} 620l7-6 1 6zM${x-5} 685l7-6 1 6zM${x2-5} 685l7-6 1 6z" fill="#000"/>`;
      tx(x-39,626.5,'fx',fx);tx(x-19,626.8,'Ø0.5','textLength="36.500"');
      tx(x+32,619.5,'fx',fx);tx(x+40,621.8,'2');tx(x+52,619,'Ø0.5','textLength="36.500"');
      tx(x-35,685,'fx',fx);tx(x-15,685,'Ø0.5','textLength="36.500"');tx(x+22,685,'2');
      tx(x+32,684.5,'fx',fx);tx(x+52,684.5,'Ø0.5','textLength="36.500"');
    });
    // Unit dimensions
    [[434,597.5,435],[434,702.5,435],[990.3,846,994],[990.3,912,995],[1055.6,781,1061],[1055.6,847,1061],[1644.5,454.3,1650],[1644.5,519.3,1653.500],[1710,388,1713],[1710,453.600,1717],[2266.2,593,2269.500],[2266.2,650,2268.500]].forEach(([x,y,t])=>{
      ah(x+1,y,1,15.5,3.8,R);ah(x+32,y,-1,15,3.8,R);
      ln(x,y,x+33,y,R,1);
      tx(t,y+5.800,'1',`fill="${R}" font-family="DejaVu Sans" font-size="15.500" textLength="9"`);});
    s+='<circle cx="2299" cy="650.500" r="4.500" fill="#fff" stroke="#000" stroke-width="1.900"/><circle cx="2299" cy="650.500" r="1.500" fill="#000"/>';
    return s;
  }
  html(){return `<svg class="scene" width="2248" height="1217" viewBox="241 72 2248 1217" font-family="Roboto" font-size="17" fill="#000">${this.scene()}</svg>
   <toast-note class="o" style="left:842px;top:9px" text="Some external references are missing."></toast-note>
   <view-cube class="o" style="left:2079px;top:8px"></view-cube>
   <div class="o row" style="left:2191px;top:144px"><ui-icon name="cube"></ui-icon><ui-icon name="caret" size="22" style="margin-left:-2px"></ui-icon></div>
   <panel-tabs class="o" style="right:0;top:534px"></panel-tabs>
   <div class="o ex" style="left:0;top:583px"><ui-icon name="list"></ui-icon></div>
   <div class="o row" style="left:2146px;top:1191px;gap:11px"><ui-icon name="tape"></ui-icon><ui-icon name="protractor"></ui-icon><ui-icon name="scale"></ui-icon></div>`}
}
class TabBar extends Part{
  css(){return `:host{display:flex;height:30px;background:#d6d6d6;gap:3px;font-size:14px}
   .plus{width:36px;display:flex;align-items:center;justify-content:center;box-sizing:border-box;padding-right:3px;flex:none}
   .t{width:199px;height:27px;box-sizing:border-box;background:#e9e9e9;border-radius:0 0 5px 5px;display:flex;align-items:center;padding:2px 0 0 9px;color:#666;box-shadow:0 1px 1px #aaa;flex:none}
   .a{background:#fff;color:#333;border-bottom:3px solid ${B};height:29px;border-radius:0 0 3px 3px}`}
  html(){return '<span class="plus"><ui-icon name="plus" size="21"></ui-icon></span>'+[['part','EXTRUSIONS_4040',123],['drawing','MISUMI-4040',86],['part','EXTRUSIONS_4080',122],['part','BASEPLATE',78],['part','LINEAR RAILS - HGH15...',153],['part','SIDE PANELS',85],['part','T-NUT AND BOLT',110],['drawing','MISUMI-4080',86],['assembly','Frame Assembly',105],['tabfolder','CAD Imports',79]].map((t,i)=>`<div class="t ${i?'':'a'}"><ui-icon name="${t[0]}" size="23"></ui-icon><ui-text w="${t[2]}">${t[1]}</ui-text></div>`).join('')}
}
class CadApp extends Part{
  css(){return `:host{display:flex;flex-direction:column;width:2489px;height:1319px;overflow:hidden}
   .body{display:flex;flex:1;min-height:0}.work{display:flex;flex-direction:column;flex:1;min-width:0}
   .mid{display:flex;flex:1;min-height:0;position:relative}sketch-dialog{position:absolute;left:200px;top:3px}`}
  html(){return `<app-header></app-header><div class="body"><side-rail></side-rail><div class="work"><tool-bar></tool-bar>
   <div class="mid"><feature-panel></feature-panel><sketch-canvas></sketch-canvas><sketch-dialog></sketch-dialog></div><tab-bar></tab-bar></div></div>`}
}
[['cad-app',CadApp],['app-header',AppHeader],['tool-bar',ToolBar],['side-rail',SideRail],['feature-panel',FeaturePanel],['tree-row',TreeRow],['sketch-canvas',SketchCanvas],['sketch-dialog',SketchDialog],['toast-note',ToastNote],['view-cube',ViewCube],['panel-tabs',PanelTabs],['tab-bar',TabBar],['ui-icon',UiIcon],['ui-text',UiText]].forEach(([n,c])=>customElements.define(n,c));
</script>
</body>
</html>
